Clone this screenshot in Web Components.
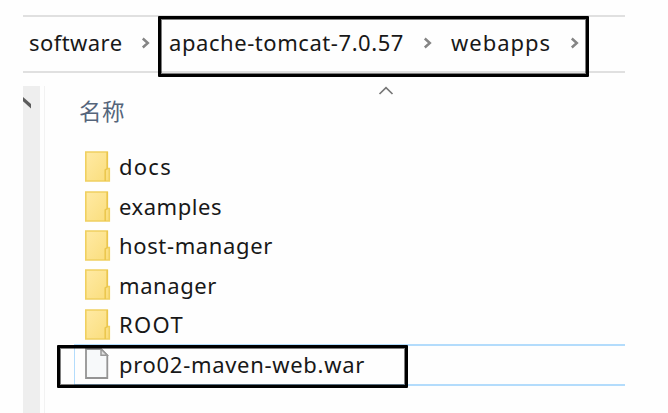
<!DOCTYPE html>
<html lang="zh-CN"><head><meta charset="utf-8"><title>webapps</title>
<style>
html,body{margin:0;background:#fefefe;overflow:hidden}
body{width:668px;height:413px;font:22px/26px "Noto Sans","Noto Sans CJK SC",sans-serif;color:#181818}
</style></head><body>
<file-explorer></file-explorer>
<script>
// Text label whose tracking is adjusted to an advance width.
class FitLabel extends HTMLElement{
  connectedCallback(){
    const r=this.attachShadow({mode:'open'});
    r.innerHTML='<style>:host{display:block;white-space:nowrap;flex:none}span{display:inline-block}</style><span></span>';
    const s=r.querySelector('span'),t=this.getAttribute('text'),w=+this.getAttribute('width');
    s.textContent=t;
    this.style.width=w+'px';
    s.style.letterSpacing=(w-s.getBoundingClientRect().width)/t.length+'px';
  }
}
customElements.define('fit-label',FitLabel);

class UiIcon extends HTMLElement{
  connectedCallback(){
    const icons={
      next:'<svg width="10" height="14" viewBox="0 0 10 14"><path d="M1.8 2.5L6.8 7L1.8 11.5" fill="none" stroke="#858585" stroke-width="2.5"/></svg>',
      sort:'<svg width="16" height="10" viewBox="0 0 16 10"><path d="M1.5 8L8 1.6L14.5 8" fill="none" stroke="#777" stroke-width="1.7"/></svg>',
      scroll:'<svg width="8" height="12" viewBox="0 0 8 12"><path d="M0 0L8 7V11.5L0 4.3Z" fill="#5c5c5c"/></svg>',
      folder:'<svg width="26" height="32" viewBox="0 0 26 32"><defs><linearGradient id="g" x2="1" y2="1"><stop stop-color="#ffeaa4"/><stop offset="1" stop-color="#fadd7b"/></linearGradient></defs><path d="M.8 1H22.3V17.5H24.3V30H.8Z" fill="url(#g)" stroke="#f0d060" stroke-width="1.6"/><path d="M22.3 1V17.5L20.2 19V30" fill="none" stroke="#ebc64d" stroke-width="1.5"/></svg>',
      file:'<svg width="26" height="32" viewBox="0 0 26 32"><path d="M1 1H16L22.3 7.3V30H1Z" fill="#f7f9fa" stroke="#949494" stroke-width="1.8"/><path d="M16 1V7.3H22.3Z" fill="#e0e0e0" stroke="#999" stroke-width="1.5"/></svg>'};
    this.attachShadow({mode:'open'}).innerHTML='<style>:host{display:block;flex:none}svg{display:block}</style>'+icons[this.getAttribute('name')];
  }
}
customElements.define('ui-icon',UiIcon);

class AddressBar extends HTMLElement{
  connectedCallback(){
    this.attachShadow({mode:'open'}).innerHTML=`<style>
    :host{box-sizing:border-box;display:flex;align-items:center;height:58px;margin:14.5px 43px 0 23px;padding:0 0 2px 6px;border:solid #e0e0e0;border-width:2px 0}
    fit-label{padding-bottom:2px}
    .a{margin-left:18px}.b{margin-left:18.5px}
    .d{margin-left:19px}.e{margin-left:18px}.f{margin-left:18.5px}
    </style><fit-label text="software" width="93.5"></fit-label><ui-icon class="a" name="next"></ui-icon><fit-label class="b" text="apache-tomcat-7.0.57" width="235"></fit-label><ui-icon class="d" name="next"></ui-icon><fit-label class="e" text="webapps" width="100"></fit-label><ui-icon class="f" name="next"></ui-icon>`;
  }
}
customElements.define('address-bar',AddressBar);

class FileRow extends HTMLElement{
  connectedCallback(){
    const n=this.getAttribute('name');
    this.attachShadow({mode:'open'}).innerHTML=`<style>
    :host{box-sizing:border-box;display:flex;align-items:center;height:39.4px;padding-left:10px;border:1px solid transparent}
    :host([selected]){height:42px;padding-bottom:2px;border:2px solid #b3dcfc;border-left-width:1px;border-right:0}
    ui-icon{margin-right:8px}
    fit-label{padding-bottom:1.6px}
    :host([selected]) fit-label{padding-bottom:0}
    </style><ui-icon name="${this.getAttribute('icon')||'folder'}"></ui-icon><fit-label text="${n}" width="${this.getAttribute('width')}"></fit-label>`;
  }
}
customElements.define('file-row',FileRow);

class FileExplorer extends HTMLElement{
  connectedCallback(){
    this.attachShadow({mode:'open'}).innerHTML=`<style>
    :host{display:flex;flex-direction:column;width:668px;height:413px;position:relative}
    .main{display:flex;flex:1;margin:13.5px 43px 0 23px}
    .bar{width:17px;background:#eee;padding-top:11px;box-sizing:border-box;flex:none}
    .list{flex:1;margin-left:4px;border-left:1px solid #f2f2f2}
    .head{display:flex;height:61.5px;color:#55657b;align-items:flex-start}
    .head fit-label{margin:12.5px 0 0 34px}
    .head ui-icon{margin-left:253px}
    .rows{margin-left:29px}
    .mark{position:absolute;box-sizing:border-box;border:3px solid #000;border-radius:1px;box-shadow:inset 0 0 0 1px rgba(0,0,0,.5)}
    </style>
    <address-bar></address-bar>
    <div class="main"><div class="bar"><ui-icon name="scroll"></ui-icon></div>
    <div class="list"><div class="head"><fit-label text="名称" width="46" style="font-size:22.5px"></fit-label><ui-icon name="sort"></ui-icon></div>
    <div class="rows"><file-row name="docs" width="53"></file-row><file-row name="examples" width="103"></file-row><file-row name="host-manager" width="154"></file-row><file-row name="manager" width="98"></file-row><file-row name="ROOT" width="65"></file-row><file-row selected icon="file" name="pro02-maven-web.war" width="246"></file-row></div></div></div>
    <div class="mark" style="left:158px;top:16px;width:431px;height:60.5px"></div>
    <div class="mark" style="left:57px;top:344.5px;width:350.5px;height:43.5px"></div>`;
  }
}
customElements.define('file-explorer',FileExplorer);
</script></body></html>
